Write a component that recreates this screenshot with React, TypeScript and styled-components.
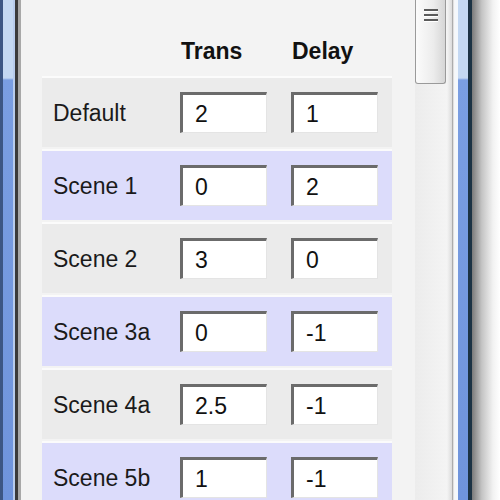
import React from "react"
import styled, { createGlobalStyle } from "styled-components"

const GlobalStyle = createGlobalStyle`
  html, body {
    margin: 0;
    padding: 0;
    background: #ffffff;
  }
  body {
    font-family: "Liberation Sans", Arial, sans-serif;
  }
`

const Screen = styled.div`
  display: flex;
  width: 500px;
  height: 500px;
  overflow: hidden;
`

const LeftFrame = styled.div`
  width: 21px;
  display: flex;
  flex-shrink: 0;
`

const FrameStrip = styled.div<{ $w: number; $bg: string }>`
  width: ${(p) => p.$w}px;
  background: ${(p) => p.$bg};
`

const ClientArea = styled.div`
  flex: 1;
  display: flex;
  background: #f3f3f3;
`

const Content = styled.div`
  width: 394px;
  padding-left: 21px;
  box-sizing: border-box;
  display: flex;
  flex-direction: column;
  overflow: hidden;
`

const HeaderRow = styled.div`
  display: grid;
  grid-template-columns: 114px 87px 87px;
  column-gap: 24px;
  height: 78px;
  flex-shrink: 0;
  padding-top: 40px;
  box-sizing: border-box;
`

const HeaderCell = styled.div`
  font-size: 23px;
  line-height: 23px;
  font-weight: bold;
  color: #111;
  padding-left: 1px;
`

const Rows = styled.div`
  display: flex;
  flex-direction: column;
  flex-shrink: 0;
  gap: 4px;
  padding-right: 23px;
`

const Row = styled.div<{ $alt: boolean }>`
  display: grid;
  grid-template-columns: 114px 87px 87px;
  column-gap: 24px;
  align-items: center;
  height: 69px;
  flex-shrink: 0;
  background: ${(p) => (p.$alt ? "#dcdcfb" : "#ebebeb")};
  box-shadow: 0 -2px 0 #fbfbfb;
`

const Label = styled.div`
  font-size: 23px;
  color: #1a1a1a;
  padding-left: 11px;
  padding-top: 1px;
  white-space: nowrap;
`

const Field = styled.input`
  width: 87px;
  height: 41px;
  box-sizing: border-box;
  margin: 0;
  padding: 2px 0 0 12px;
  border-style: solid;
  border-width: 3px 1px 1px 3px;
  border-color: #6b6b6b #e4e4e4 #e4e4e4 #6b6b6b;
  background: #fff;
  font-family: "Liberation Sans", Arial, sans-serif;
  font-size: 23px;
  color: #111;
  outline: none;
`

const ScrollTrack = styled.div`
  width: 40px;
  display: flex;
  flex-direction: column;
  align-items: flex-start;
  background: linear-gradient(to right, #ececec, #f4f4f4 80%, #dadada 93%, #9c9c9c 94%, #f6f6f6 97%);
`

const Thumb = styled.div`
  width: 31px;
  height: 84px;
  box-sizing: border-box;
  border: 1px solid #9a9a9a;
  border-top: none;
  border-radius: 0 0 3px 3px;
  background: linear-gradient(to right, #fbfbfb, #ececec 60%, #d6d6d6);
  display: flex;
  justify-content: center;
  padding-top: 7px;
`

const RightFrame = styled.div`
  width: 17px;
  display: flex;
  flex-shrink: 0;
`

const Shadow = styled.div`
  flex: 1;
  background: linear-gradient(to right, #7a7a7a, #c4c4c4 35%, #f2f2f2 75%, #ffffff);
`

const blueTop = "linear-gradient(to bottom, #c4d8f2 0, #c4d8f2 78px, #7a9ee2 80px, #6f94dc 100%)"

const rows = [
  { name: "Default", trans: "2", delay: "1" },
  { name: "Scene 1", trans: "0", delay: "2" },
  { name: "Scene 2", trans: "3", delay: "0" },
  { name: "Scene 3a", trans: "0", delay: "-1" },
  { name: "Scene 4a", trans: "2.5", delay: "-1" },
  { name: "Scene 5b", trans: "1", delay: "-1" },
]

const Grip = () => (
  <svg width="14" height="18" viewBox="0 0 14 18">
    {[2, 7, 12].map((y) => (
      <g key={y}>
        <rect x="0" y={y} width="14" height="2" fill="#5a5a5a" />
        <rect x="0" y={y + 2} width="14" height="1" fill="#ffffff" />
      </g>
    ))}
  </svg>
)

export default function App() {
  return (
    <>
      <GlobalStyle />
      <Screen>
        <LeftFrame>
          <FrameStrip $w={3} $bg="#3c5684" />
          <FrameStrip $w={10} $bg={blueTop} />
          <FrameStrip $w={2} $bg="#b8ccec" />
          <FrameStrip $w={3} $bg="#3a3a3a" />
          <FrameStrip $w={3} $bg="#a8a8a8" />
        </LeftFrame>
        <ClientArea>
          <Content>
            <HeaderRow>
              <div />
              <HeaderCell>Trans</HeaderCell>
              <HeaderCell>Delay</HeaderCell>
            </HeaderRow>
            <Rows>
              {rows.map((r, i) => (
                <Row key={r.name} $alt={i % 2 === 1}>
                  <Label>{r.name}</Label>
                  <Field defaultValue={r.trans} />
                  <Field defaultValue={r.delay} />
                </Row>
              ))}
            </Rows>
          </Content>
          <ScrollTrack>
            <Thumb>
              <Grip />
            </Thumb>
          </ScrollTrack>
        </ClientArea>
        <RightFrame>
          <FrameStrip $w={3} $bg="#f4f8fc" />
          <FrameStrip $w={10} $bg={blueTop} />
          <FrameStrip $w={4} $bg="#1c3344" />
        </RightFrame>
        <Shadow />
      </Screen>
    </>
  )
}
